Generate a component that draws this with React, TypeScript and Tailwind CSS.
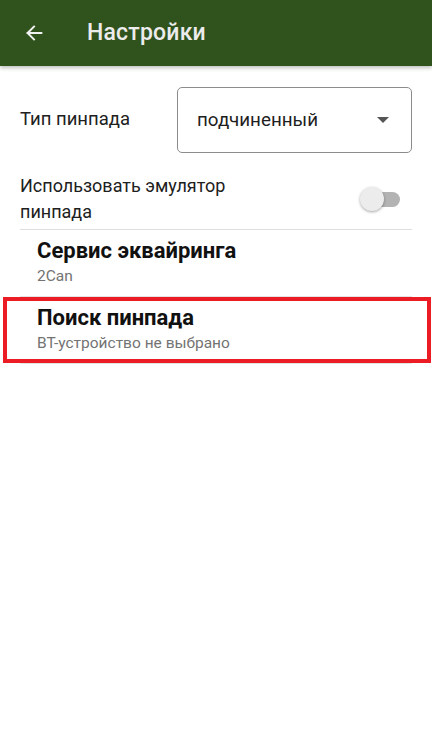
import { useState } from 'react';

type Pref = { title: string; summary: string };

const prefs: Pref[] = [
  { title: 'Сервис эквайринга', summary: '2Can' },
  { title: 'Поиск пинпада', summary: 'BT-устройство не выбрано' },
];

export default function App() {
  const [emulator, setEmulator] = useState(false);

  return (
    <div className="relative w-[432px] h-[738px] bg-white overflow-hidden font-['Roboto',sans-serif]">
      {/* Toolbar */}
      <header className="h-[66px] bg-[#30521d] flex items-center shadow-[0_2px_4px_rgba(0,0,0,0.25)] relative z-10">
        <button className="w-[44px] h-[44px] ml-[12px] flex items-center justify-center">
          <svg width="22" height="22" viewBox="0 0 24 24" fill="none">
            <path d="M20 12H5M12 5l-7 7 7 7" stroke="#f1f1f1" strokeWidth="2.2" strokeLinecap="square" />
          </svg>
        </button>
        <h1 className="ml-[31px] text-[23px] font-medium text-[#ececec] tracking-[0.2px]">Настройки</h1>
      </header>

      <main className="px-5 pt-[21px]">
        <div className="flex items-center h-[66px]">
          <span className="w-[157px] text-[18.5px] text-[#202020]">Тип пинпада</span>
          <div className="w-[235px] h-[66px] border border-[#8c8c8c] rounded-[5px] flex items-center justify-between pl-[19px] pr-[22px]">
            <span className="text-[18.8px] text-[#1e1e1e]">подчиненный</span>
            <svg width="12" height="6" viewBox="0 0 12 6">
              <path d="M0 0h12L6 6z" fill="#555" />
            </svg>
          </div>
        </div>

        <div className="flex items-center justify-between mt-[20px] pb-[4px] border-b border-[#dedede]">
          <span className="text-[18px] leading-[26px] text-[#202020] w-[260px]">
            Использовать эмулятор пинпада
          </span>
          <button
            onClick={() => setEmulator(!emulator)}
            className="relative w-[40px] h-[26px] mr-[12px] flex items-center"
          >
            <span className="absolute left-[6px] right-0 h-[15px] rounded-full bg-[#b3b3b3]" />
            <span className="absolute left-0 w-[24px] h-[24px] rounded-full bg-[#ececec] shadow-[0_1px_3px_rgba(0,0,0,0.35)]" />
          </button>
        </div>

        {prefs.map((p) => (
          <div key={p.title} className="pl-[17px] pt-[8px] pb-[10px] border-b border-[#e4e4e4]">
            <div className="text-[22px] leading-[26px] font-bold text-[#111]">{p.title}</div>
            <div className="mt-[2px] text-[15.5px] leading-[20px] text-[#737373]">{p.summary}</div>
          </div>
        ))}
      </main>

      {/* annotation */}
      <div className="absolute left-[3px] top-[297px] w-[428px] h-[66px] border-4 border-[#ec1c24] pointer-events-none" />
    </div>
  );
}
